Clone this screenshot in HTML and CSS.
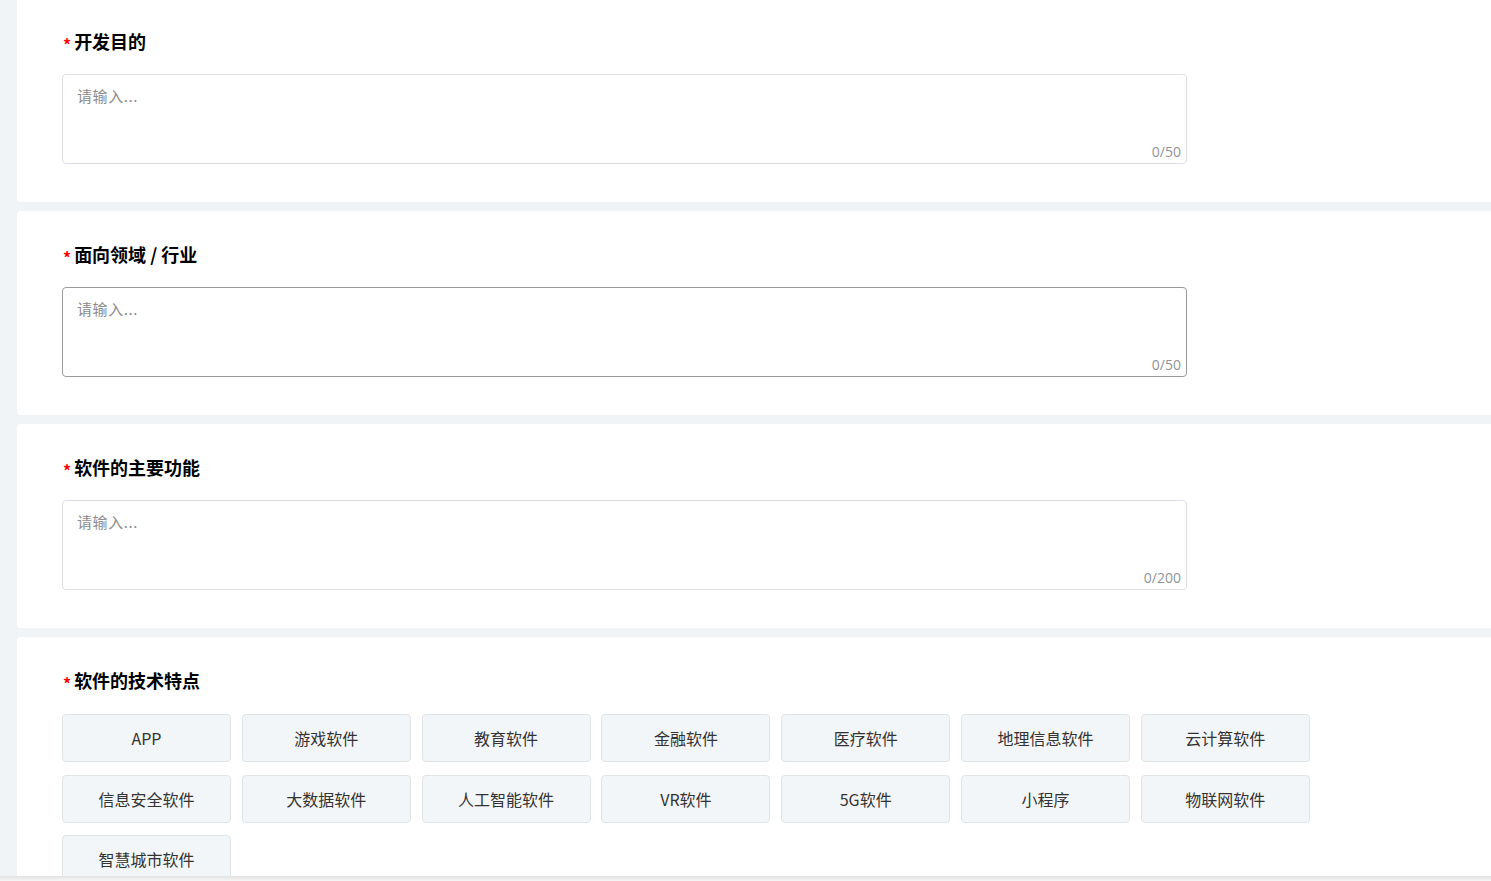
FILE: index.html
```html
<!DOCTYPE html>
<html lang="zh-CN">
<head>
<meta charset="utf-8">
<title>表单</title>
<link rel="stylesheet" href="styles.css">
</head>
<body>
<div class="page">
  <section class="card">
    <h3 class="label"><span class="star">*</span>开发目的</h3>
    <div class="field">
      <textarea class="input" placeholder="请输入..."></textarea>
      <span class="count">0/50</span>
    </div>
  </section>
  <section class="card">
    <h3 class="label"><span class="star">*</span>面向领域 / 行业</h3>
    <div class="field">
      <textarea class="input hover" placeholder="请输入..."></textarea>
      <span class="count">0/50</span>
    </div>
  </section>
  <section class="card">
    <h3 class="label"><span class="star">*</span>软件的主要功能</h3>
    <div class="field">
      <textarea class="input" placeholder="请输入..."></textarea>
      <span class="count">0/200</span>
    </div>
  </section>
  <section class="card card-tags">
    <h3 class="label"><span class="star">*</span>软件的技术特点</h3>
    <div class="tags">
      <div class="tag">APP</div>
      <div class="tag">游戏软件</div>
      <div class="tag">教育软件</div>
      <div class="tag">金融软件</div>
      <div class="tag">医疗软件</div>
      <div class="tag">地理信息软件</div>
      <div class="tag">云计算软件</div>
      <div class="tag">信息安全软件</div>
      <div class="tag">大数据软件</div>
      <div class="tag">人工智能软件</div>
      <div class="tag">VR软件</div>
      <div class="tag">5G软件</div>
      <div class="tag">小程序</div>
      <div class="tag">物联网软件</div>
      <div class="tag">智慧城市软件</div>
    </div>
  </section>
</div>
<div class="footer-bar"></div>
</body>
</html>
```
FILE: styles.css
```css
* { box-sizing: border-box; }
html, body { margin: 0; padding: 0; }
body {
  background: #f1f4f7;
  font-family: "Noto Sans CJK SC", "Noto Sans", sans-serif;
  overflow: hidden;
  height: 881px;
}
.page {
  margin-top: -2px;
  padding-left: 17px;
  display: flex;
  flex-direction: column;
  gap: 9px;
}
.card {
  background: #fff;
  border-radius: 4px 0 0 4px;
  height: 204px;
  padding: 29px 0 0 45px;
}
.card-tags { height: 300px; }
.label {
  margin: 0;
  height: 28px;
  display: flex;
  align-items: center;
  font-size: 18px;
  font-weight: 700;
  color: #000;
  line-height: 28px;
}
.star {
  color: #f00;
  font-size: 16px;
  font-weight: 700;
  margin-right: 3px;
  margin-left: 1px;
  margin-top: 5px;
}
.field {
  position: relative;
  width: 1125px;
  height: 90px;
  margin-top: 19px;
}
.input {
  display: block;
  width: 100%;
  height: 100%;
  resize: none;
  border: 1px solid #dcdfe6;
  border-radius: 4px;
  padding: 10px 14px;
  font-family: "Noto Sans CJK SC", "Noto Sans", sans-serif;
  font-size: 15px;
  line-height: 22px;
  color: #333;
  outline: none;
  background: #fff;
}
.input.hover { border-color: #999; }
.input::placeholder { color: #8c8c8c; letter-spacing: 0.6px; }
.count {
  position: absolute;
  right: 6px;
  bottom: 2px;
  font-family: "Open Sans", "Noto Sans", sans-serif;
  font-size: 14px;
  color: #909399;
  line-height: 20px;
}
.tags {
  margin-top: 20px;
  display: grid;
  grid-template-columns: repeat(7, 169px);
  column-gap: 10.8px;
  row-gap: 12.3px;
}
.tag {
  height: 48.3px;
  background: #f3f6f8;
  border: 1px solid #dfe4e7;
  border-radius: 4px;
  display: flex;
  align-items: center;
  justify-content: center;
  font-size: 16px;
  color: #333;
}
.footer-bar {
  position: fixed;
  left: 0;
  right: 0;
  bottom: 0;
  height: 5px;
  background: linear-gradient(#e2e2e2, #f6f6f6);
}
```
